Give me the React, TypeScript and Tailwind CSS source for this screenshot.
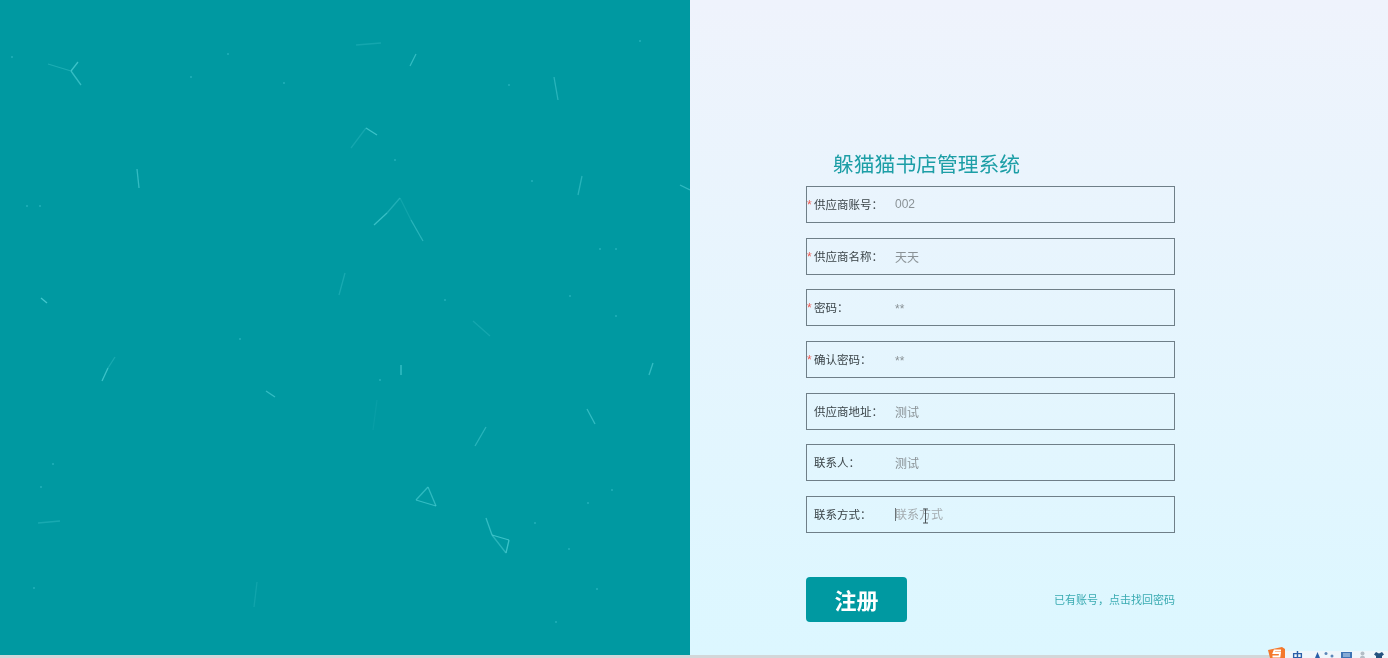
const fields = [
  { label: '供应商账号：', value: '002', required: true, nudge: 'pb-[2px]' },
  { label: '供应商名称：', value: '天天', required: true, nudge: 'pt-[3px]' },
  { label: '密码：', value: '**', required: true, nudge: 'pt-[2px]' },
  { label: '确认密码：', value: '**', required: true, nudge: 'pt-[2px]' },
  { label: '供应商地址：', value: '测试', required: false, nudge: 'pt-[3px]' },
  { label: '联系人：', value: '测试', required: false, nudge: 'pt-[3px]' },
  { label: '联系方式：', value: '', required: false, nudge: '' },
];

// line fragments of the particle background: [x1, y1, x2, y2, opacity]
const lines: number[][] = [
  [48, 64, 71, 71, 0.35], [71, 71, 78, 62, 0.75], [71, 71, 81, 85, 0.65],
  [137, 169, 139, 188, 0.65], [356, 45, 381, 43, 0.25], [410, 66, 416, 54, 0.65],
  [554, 77, 558, 100, 0.5], [366, 128, 377, 135, 0.75], [351, 148, 366, 128, 0.25],
  [374, 225, 387, 213, 0.7], [387, 213, 400, 198, 0.4], [400, 198, 411, 220, 0.2],
  [411, 220, 423, 241, 0.5], [578, 195, 582, 176, 0.5], [680, 185, 690, 190, 0.6],
  [41, 298, 47, 303, 0.85], [339, 295, 345, 273, 0.3], [473, 321, 490, 336, 0.25],
  [102, 381, 108, 368, 0.75], [108, 368, 115, 357, 0.3], [401, 365, 401, 375, 0.75],
  [266, 391, 275, 397, 0.65], [649, 375, 653, 363, 0.65], [587, 409, 595, 424, 0.65],
  [475, 446, 486, 427, 0.5], [416, 500, 428, 487, 0.6], [428, 487, 436, 506, 0.6],
  [416, 500, 436, 506, 0.65], [486, 518, 492, 535, 0.65], [492, 535, 509, 540, 0.75],
  [509, 540, 506, 553, 0.75], [506, 553, 492, 535, 0.5], [38, 523, 60, 521, 0.3],
  [254, 607, 257, 582, 0.2], [373, 430, 377, 400, 0.1],
];

// single faint points: [x, y]
const dots: number[][] = [
  [12, 57], [40, 206], [27, 206], [191, 77], [228, 54], [284, 83], [240, 339],
  [640, 41], [509, 85], [395, 160], [532, 181], [600, 249], [570, 296], [616, 316],
  [53, 464], [41, 487], [34, 588], [535, 523], [569, 549], [597, 589], [588, 503],
  [556, 622], [612, 490], [380, 380], [445, 300], [616, 249],
];

function Particles() {
  return (
    <svg className="absolute inset-0 h-full w-full" viewBox="0 0 690 655">
      {lines.map(([x1, y1, x2, y2, o], i) => (
        <line key={i} x1={x1} y1={y1} x2={x2} y2={y2} stroke="#4fd0d6" strokeWidth="1.3" strokeOpacity={o} />
      ))}
      {dots.map(([cx, cy], i) => (
        <circle key={i} cx={cx} cy={cy} r="1" fill="#38c0c8" fillOpacity="0.6" />
      ))}
    </svg>
  );
}

function Tray() {
  return (
    <div className="absolute right-0 bottom-0 flex h-[11px] w-[120px] items-start overflow-hidden">
      <svg className="shrink-0" width="17" height="11" viewBox="0 0 17 11">
        <path d="M0 3 14 0l3 2 0 9H2z" fill="#f4782c" />
        <path d="M13 3.500H6.500L5.500 6h6.500l-.5 3.500H4.500" fill="none" stroke="#fff" strokeWidth="1.8" />
      </svg>
      <div className="mt-[4px] flex h-[7px] flex-1 items-start bg-[#eef6fb] pl-[7px]">
        <span className="mt-[1px] w-[11px] shrink-0 text-[11px] leading-none font-bold text-[#2a5fa8]">中</span>
        <svg className="shrink-0" width="85" height="7" viewBox="0 0 85 7">
          <path d="M12 7 14.500 1 17 7z" fill="#2a5fa8" />
          <circle cx="23" cy="2.500" r="1.500" fill="#5b86b8" />
          <circle cx="29" cy="5" r="1.500" fill="#5b86b8" />
          <rect x="38" y="1" width="11" height="6" fill="#3e74b5" />
          <path d="M40 3h7M40 5h7" stroke="#cfe2f5" strokeWidth="1" />
          <circle cx="59.500" cy="2.500" r="2" fill="#b3bdc6" />
          <path d="M57 7c0-3 5-3 5 0z" fill="#b3bdc6" />
          <path d="M73 1l3 1.500L79 1l2 2.500-2 1.500v2h-6V5l-2-1.500z" fill="#24527f" />
        </svg>
      </div>
    </div>
  );
}

export default function App() {
  return (
    <div className="relative flex h-[658px] w-[1388px] flex-col overflow-hidden bg-[#d3d7d9] font-['Liberation_Sans','Noto_Sans_CJK_SC',sans-serif] blur-[0.35px]">
      <div className="flex h-[655px]">
        <div className="relative w-[690px] bg-[#0099a1]">
          <Particles />
        </div>
        <div className="flex flex-1 flex-col bg-gradient-to-b from-[#eff3fc] to-[#dcf7ff] pl-[116px] pt-[152px]">
          <h1 className="ml-[27px] h-[34px] text-[20.800px] leading-[26px] font-normal text-[#1c9ea6]">躲猫猫书店管理系统</h1>
          <form className="flex w-[369px] flex-col gap-[14.700px]">
            {fields.map((f) => (
              <label key={f.label} className="relative flex h-[37px] items-center border border-[#6f7f88] pl-[7px]">
                {f.required && (
                  <span className="absolute top-[12px] left-0 text-[12px] leading-none text-[#ef5a52]">*</span>
                )}
                <span className="w-[81px] pt-[2px] text-[11.500px] text-[#3a4347]">{f.label}</span>
                <input
                  readOnly
                  value={f.value}
                  placeholder={f.label === '联系方式：' ? '联系方式' : ''}
                  className={`min-w-0 flex-1 bg-transparent text-[12px] text-[#8a9296] outline-none placeholder:text-[#a3abaf] ${f.nudge}`}
                />
              </label>
            ))}
          </form>
          <div className="mt-[44px] flex w-[369px] items-center justify-between">
            <button type="button" className="h-[45px] w-[101px] rounded-[4px] bg-[#0099a1] pt-[3px] text-[22px] font-bold text-white">
              注册
            </button>
            <a className="pt-[2px] text-[11px] text-[#3aabb2]">已有账号，点击找回密码</a>
          </div>
        </div>
      </div>
      {/* text caret and mouse cursor sitting on the last field */}
      <svg className="absolute top-[506px] left-[893px]" width="38" height="20" viewBox="0 0 38 20">
        <path d="M2.500 2v13" stroke="#6b7478" strokeWidth="1" />
        <path d="M30 3h5M32.500 3v14M30 17h5" fill="none" stroke="#4b5357" strokeWidth="1" />
      </svg>
      <Tray />
    </div>
  );
}
